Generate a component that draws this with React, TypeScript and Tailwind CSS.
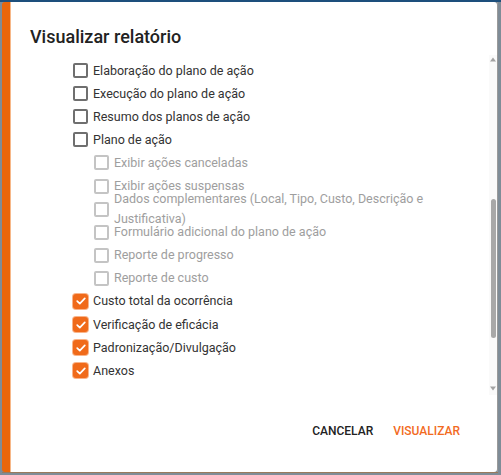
import React from "react";

type Item = { label: string; checked?: boolean; sub?: boolean; twoLine?: boolean };

const items: Item[] = [
  { label: "Elaboração do plano de ação" },
  { label: "Execução do plano de ação" },
  { label: "Resumo dos planos de ação" },
  { label: "Plano de ação" },
  { label: "Exibir ações canceladas", sub: true },
  { label: "Exibir ações suspensas", sub: true },
  { label: "Dados complementares (Local, Tipo, Custo, Descrição e Justificativa)", sub: true, twoLine: true },
  { label: "Formulário adicional do plano de ação", sub: true },
  { label: "Reporte de progresso", sub: true },
  { label: "Reporte de custo", sub: true },
  { label: "Custo total da ocorrência", checked: true },
  { label: "Verificação de eficácia", checked: true },
  { label: "Padronização/Divulgação", checked: true },
  { label: "Anexos", checked: true },
];

function Box({ checked, disabled }: { checked?: boolean; disabled?: boolean }) {
  if (checked) {
    return (
      <span className="flex h-[15px] w-[15px] shrink-0 items-center justify-center rounded-[3px] bg-[#f06a1a] ring-1 ring-[#f9b48a]">
        <svg width="12" height="12" viewBox="0 0 12 12" fill="none">
          <path d="M2.2 6.2 L4.8 8.7 L9.8 3.4" stroke="white" strokeWidth="1.7" strokeLinecap="round" strokeLinejoin="round" />
        </svg>
      </span>
    );
  }
  return (
    <span
      className={`h-[15px] w-[15px] shrink-0 rounded-[2px] border-2 ${
        disabled ? "border-[#c4c4c4]" : "border-[#6f6f6f]"
      }`}
    />
  );
}

export default function App() {
  return (
    <div
      className="h-[475px] w-[501px] overflow-hidden border-t-2 border-[#1d4f7c] bg-[#7f8c97] pb-[2px] pl-[2px] pr-[3px]"
      style={{ fontFamily: "Roboto, 'Liberation Sans', sans-serif" }}
    >
      <div className="flex h-full w-full border-b border-[#9a7a5c]">
        <div className="w-[8px] shrink-0 rounded-l-[3px] bg-[#ea660b]" />
        <div className="flex min-w-0 flex-1 flex-col rounded-r-[3px] border-l border-[#f7b889] bg-white">
          <h2 className="pl-[19px] pt-[24px] text-[18px] font-medium leading-[22px] text-[#222]">
            Visualizar relatório
          </h2>
          <div className="relative mt-[7px] h-[340px] overflow-hidden">
            <div className="pt-[4px]">
              {items.map((it, i) => (
                <div
                  key={i}
                  className={`flex h-[23.1px] items-center gap-[5px] ${it.sub ? "pl-[83px]" : "pl-[62px]"}`}
                >
                  <Box checked={it.checked} disabled={it.sub} />
                  <span
                    className={`text-[12.5px] ${
                      it.sub ? "text-[#9e9e9e]" : "text-[#333]"
                    } ${it.twoLine ? "w-[318px] leading-[20px]" : "whitespace-nowrap leading-[18px]"}`}
                  >
                    {it.label}
                  </span>
                </div>
              ))}
            </div>
            {/* scrollbar overlay */}
            <div className="absolute right-0 top-0 flex h-full w-[8px] flex-col items-center bg-[#fafafa]">
              <svg width="6" height="5" viewBox="0 0 6 5" className="mt-[2px]">
                <path d="M0 4.5 L3 0.5 L6 4.5 Z" fill="#a3a3a3" />
              </svg>
              <div className="mt-[137px] h-[139px] w-[5px] rounded-full bg-[#a8a8a8]" />
              <div className="flex-1" />
              <svg width="6" height="5" viewBox="0 0 6 5" className="mb-[4px]">
                <path d="M0 0.5 L3 4.5 L6 0.5 Z" fill="#a3a3a3" />
              </svg>
            </div>
          </div>
          <div className="flex flex-1 items-center justify-end gap-[20px] pb-[6px] pr-[37px]">
            <button className="text-[12px] font-medium text-[#222]">CANCELAR</button>
            <button className="text-[12px] font-medium text-[#f26b1f]">VISUALIZAR</button>
          </div>
        </div>
        <div className="w-[1px] shrink-0 bg-[#9a9a9a]" />
      </div>
    </div>
  );
}
